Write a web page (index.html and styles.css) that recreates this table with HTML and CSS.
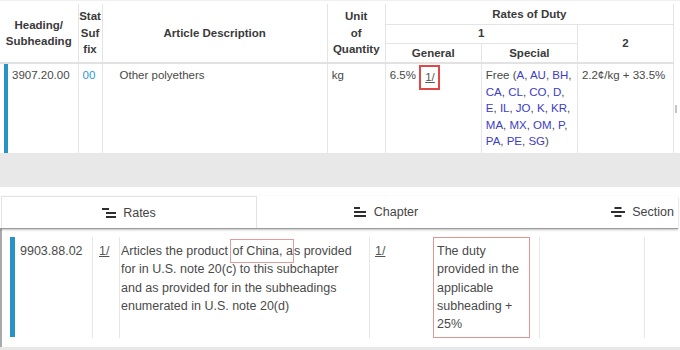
FILE: index.html
```html
<!DOCTYPE html>
<html>
<head>
<meta charset="utf-8">
<link rel="stylesheet" href="styles.css">
</head>
<body>
<div class="top">
  <table class="hts">
    <colgroup>
      <col class="w-code"><col class="w-stat"><col class="w-desc"><col class="w-unit"><col class="w-rate"><col class="w-rate"><col class="w-rate">
    </colgroup>
    <thead>
      <tr class="h1">
        <th rowspan="3" class="first">Heading/<br>Subheading</th>
        <th rowspan="3">Stat<br>Suf<br>fix</th>
        <th rowspan="3">Article Description</th>
        <th rowspan="3">Unit<br>of<br>Quantity</th>
        <th colspan="3">Rates of Duty</th>
      </tr>
      <tr class="h2">
        <th colspan="2">1</th>
        <th rowspan="2">2</th>
      </tr>
      <tr class="h3">
        <th>General</th>
        <th>Special</th>
      </tr>
    </thead>
    <tbody>
      <tr class="body-row">
        <td class="c-code first">3907.20.00</td>
        <td class="c-stat">00</td>
        <td class="c-desc">Other polyethers</td>
        <td>kg</td>
        <td class="nw">6.5% <span class="mark"><u>1/</u></span></td>
        <td class="nw">Free (<span class="lk">A</span>, <span class="lk">AU</span>, <span class="lk">BH</span>,<br><span class="lk">CA</span>, <span class="lk">CL</span>, <span class="lk">CO</span>, <span class="lk">D</span>,<br><span class="lk">E</span>, <span class="lk">IL</span>, <span class="lk">JO</span>, <span class="lk">K</span>, <span class="lk">KR</span>,<br><span class="lk">MA</span>, <span class="lk">MX</span>, <span class="lk">OM</span>, <span class="lk">P</span>,<br><span class="lk">PA</span>, <span class="lk">PE</span>, <span class="lk">SG</span>)</td>
        <td class="nw">2.2¢/kg + 33.5%</td>
      </tr>
    </tbody>
  </table>
  <div class="thumb"></div>
</div>

<div class="panel">
  <div class="tabs">
    <div class="tab active">
      <svg class="ico" viewBox="0 0 14 12" width="14" height="12"><rect x="0" y="1" width="7" height="2"/><rect x="4" y="5" width="10" height="2"/><rect x="4" y="9" width="10" height="2"/></svg>
      <span>Rates</span>
    </div>
    <div class="tab">
      <svg class="ico" viewBox="0 0 14 12" width="14" height="12"><rect x="1" y="1" width="6" height="2"/><rect x="1" y="5" width="12" height="2"/><rect x="1" y="9" width="12" height="2"/></svg>
      <span>Chapter</span>
    </div>
    <div class="tab">
      <svg class="ico" viewBox="0 0 14 12" width="14" height="12"><rect x="3.5" y="1" width="7" height="2"/><rect x="0" y="5" width="14" height="2"/><rect x="3.5" y="9" width="7" height="2"/></svg>
      <span>Section</span>
    </div>
  </div>
  <div class="rows">
    <div class="row">
      <div class="cell c1">9903.88.02</div>
      <div class="cell c2"><u>1/</u></div>
      <div class="cell c3">Articles the product <span class="hl">of China, a</span>s provided<br>for in U.S. note 20(c) to this subchapter<br>and as provided for in the subheadings<br>enumerated in U.S. note 20(d)</div>
      <div class="cell c4"><u>1/</u></div>
      <div class="cell c5"><div class="box">The duty<br>provided in the<br>applicable<br>subheading +<br>25%</div></div>
      <div class="cell c6"></div>
      <div class="cell c7"></div>
    </div>
  </div>
</div>
</body>
</html>
```

FILE: styles.css
```css
html, body {
  margin: 0;
  padding: 0;
}
body {
  background: #e8e8e8;
  font-family: "Liberation Sans", Arial, sans-serif;
  color: #484848;
  width: 680px;
  height: 350px;
  overflow: hidden;
}

/* ---------- top table ---------- */
.top {
  position: relative;
  background: #fff;
  height: 153px;
  padding-top: 3px;
  box-sizing: border-box;
  border-top: 1px solid #f0f0f0;
}
.hts {
  border-collapse: collapse;
  table-layout: fixed;
  width: 674px;
  font-size: 11.5px;
}
.w-code { width: 78px; }
.w-stat { width: 24px; }
.w-desc { width: 225px; }
.w-unit { width: 58px; }
.w-rate { width: 96px; }

.hts th {
  font-weight: bold;
  color: #3a3a3a;
  line-height: 16.5px;
  padding: 0;
  text-align: center;
  vertical-align: middle;
  border: 1px solid #e4e4e4;
}
.hts tr.h1 th { border-top: 0; }
.hts th.first { border-left: 0; }
.hts tr.h1 { height: 20px; }
.hts tr.h2 { height: 19px; }
.hts tr.h3 { height: 20px; }

.hts td {
  vertical-align: top;
  line-height: 16.5px;
  padding: 3px 2px 0 4px;
  border-left: 1px solid #e6e6e6;
  border-right: 1px solid #e6e6e6;
  border-top: 2px solid #e2e2e2;
}
.hts td.first { border-left: 0; }
.hts tr.body-row { height: 90px; }
.c-code {
  padding-left: 12px !important;
  background: linear-gradient(to right, transparent 4px, #2793c6 4px, #2793c6 8px, transparent 8px);
}
.c-stat { color: #2a9ad3; }
.c-desc { padding-left: 17px !important; }
.nw { white-space: nowrap; }
.lk { color: #3c3cc6; }
.mark {
  display: inline-block;
  line-height: 15px;
  padding: 3px 3px 3px 4px;
  margin-top: -2px;
  border: 2px solid #e04848;
  vertical-align: top;
}
.mark u, .c2 u, .c4 u { color: #555; }
.thumb {
  position: absolute;
  left: 675px;
  top: 104px;
  width: 2px;
  height: 8px;
  background: #c4c4c4;
}

/* ---------- bottom panel ---------- */
.panel {
  margin-top: 34px;
  background: #fff;
  height: 160px;
  padding-top: 9px;
  box-sizing: border-box;
  overflow: hidden;
}
.tabs {
  display: flex;
  height: 32px;
  border-bottom: 1px solid #9c9c9c;
  box-shadow: 0 1px 2px rgba(0, 0, 0, 0.25);
  position: relative;
  width: 678px;
}
.tab {
  flex: 0 0 257px;
  height: 32px;
  box-sizing: border-box;
  display: flex;
  align-items: center;
  justify-content: center;
  gap: 7px;
  font-size: 12.5px;
  color: #444;
}
.tab.active {
  border: 1px solid #e2e2e2;
  border-bottom: 0;
  margin-left: 1px;
  flex-basis: 256px;
}
.ico { fill: #2e2e2e; display: block; }

.rows {
  border-left: 2px solid #a9a9a9;
  height: 118px;
  padding-top: 8px;
  box-sizing: border-box;
}
.row {
  display: grid;
  grid-template-columns: 82px 27px 250px 61px 109px 105px 1fr;
  margin-left: 8px;
  height: 100px;
  font-size: 12.5px;
  line-height: 18.3px;
  color: #4a4a4a;
}
.cell {
  padding-top: 5px;
  white-space: nowrap;
}
.c1 {
  border-left: 5px solid #2793c6;
  padding-left: 5px;
  margin-bottom: 1px;
}
.c2 { border-left: 1px solid #e6e6e6; padding-left: 6px; }
.c3 { border-left: 1px solid #e6e6e6; padding-left: 1px; }
.c4 { border-left: 1px solid #e6e6e6; padding-left: 5px; }
.c5 { padding: 0 0 0 3px; }
.c6 { border-left: 1px solid #e6e6e6; }
.c7 { border-left: 1px solid #e6e6e6; }
.hl {
  border: 1px solid #e29a9a;
  padding: 4px 0 4px 1px;
  margin-left: -1px;
}
.box {
  width: 97px;
  height: 101px;
  box-sizing: border-box;
  border: 1px solid #e09494;
  padding: 4px 3px 0 3px;
}
```
